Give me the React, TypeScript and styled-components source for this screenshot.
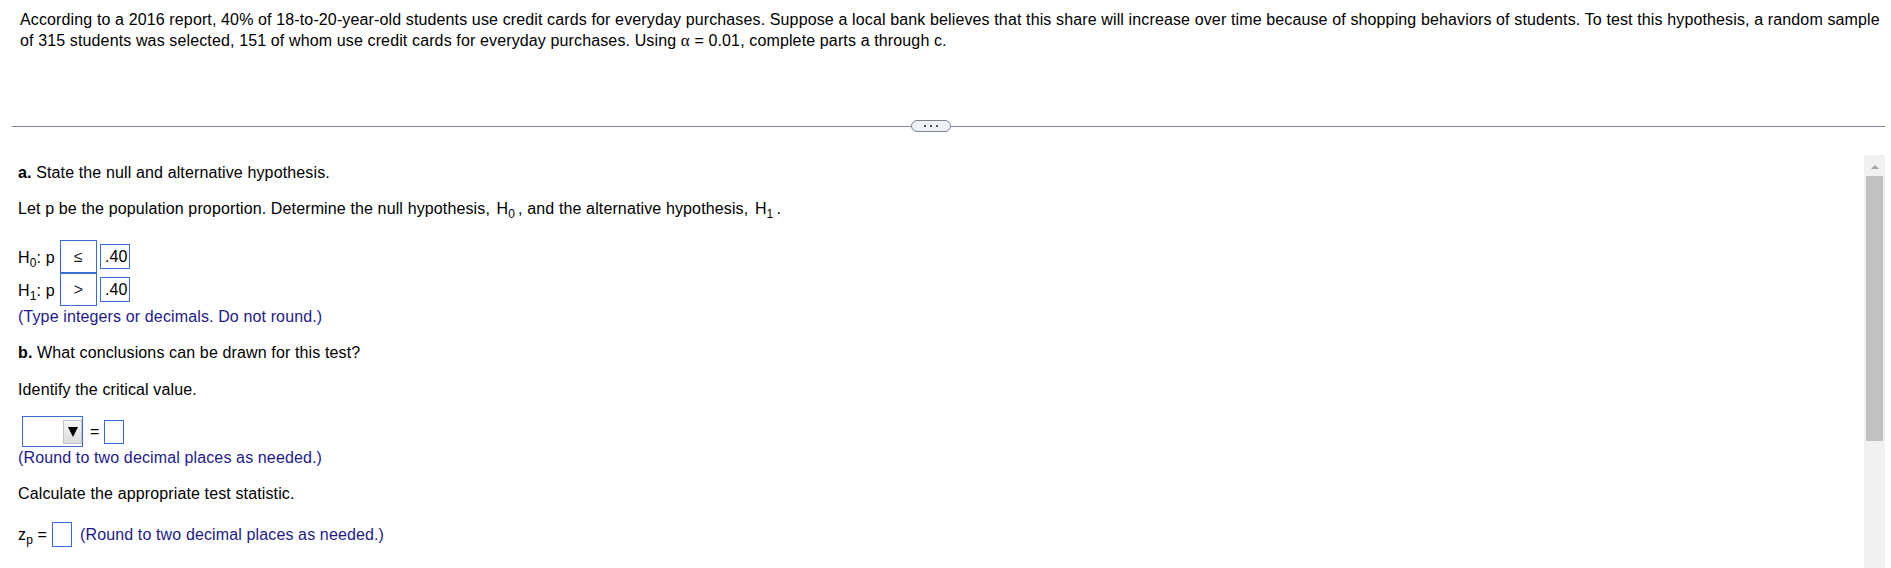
import React from 'react';
import styled, { createGlobalStyle } from 'styled-components';

const GlobalStyle = createGlobalStyle`
  html, body { margin: 0; padding: 0; background: #fff; }
  body {
    font-family: "Liberation Sans", Arial, sans-serif;
    font-size: 16px;
    letter-spacing: 0.13px;
    color: #000;
  }
`;

const BLUE = '#3b6ccf';
const NOTE = '#1e1a86';

const Page = styled.div`
  width: 1891px;
  height: 568px;
  overflow: hidden;
  box-sizing: border-box;
  padding-right: 6px;
  display: flex;
  flex-direction: column;
`;

const Stem = styled.p`
  margin: 0;
  padding: 9px 0 0 20px;
  line-height: 21px;
`;

const Alpha = styled.span`
  font-family: "Liberation Serif", "Times New Roman", serif;
  font-size: 17px;
`;

const Divider = styled.div`
  display: flex;
  align-items: center;
  height: 12px;
  margin: 69px 0 0 12px;
`;

const Rule = styled.div<{ $w?: number }>`
  height: 1px;
  background: #7c8595;
  flex: ${(p) => (p.$w ? `0 0 ${p.$w}px` : '1 1 auto')};
`;

const MorePill = styled.div`
  width: 40px;
  height: 12px;
  box-sizing: border-box;
  border: 1px solid #7c8595;
  border-radius: 6px;
  background: #eef1f5;
  display: flex;
  align-items: center;
  justify-content: center;
  gap: 4px;
`;

const Dot = styled.span`
  width: 2px;
  height: 2px;
  background: #4a5160;
`;

const Panel = styled.div`
  display: flex;
  margin-top: 23px;
  flex: 1 1 auto;
  min-height: 0;
`;

const Content = styled.div`
  flex: 1 1 auto;
  padding: 9px 0 0 18px;
  line-height: 18px;
`;

const ScrollTrack = styled.div`
  width: 21px;
  background: #f1f1f1;
  display: flex;
  flex-direction: column;
  align-items: center;
  padding-top: 10px;
  box-sizing: border-box;
`;

const UpArrow = styled.div`
  width: 0;
  height: 0;
  border-left: 4.5px solid transparent;
  border-right: 4.5px solid transparent;
  border-bottom: 4px solid #a3a3a3;
`;

const Thumb = styled.div`
  width: 17px;
  height: 265px;
  margin-top: 7px;
  background: #c1c1c1;
`;

const Para = styled.p<{ $mt: number; $note?: boolean }>`
  margin: ${(p) => p.$mt}px 0 0;
  color: ${(p) => (p.$note ? NOTE : '#000')};
`;

const Sub = styled.sub`
  font-size: 12px;
  line-height: 0;
  vertical-align: -4px;
`;

const InlineMath = styled.span`
  padding: 0 3px 0 2px;
`;

const HypRow = styled.div<{ $mt: number }>`
  display: flex;
  align-items: center;
  height: 33px;
  margin-top: ${(p) => p.$mt}px;
`;

const HypLabel = styled.span`
  width: 42px;
  padding-top: 2px;
`;

const RelBox = styled.div`
  width: 37px;
  height: 33px;
  box-sizing: border-box;
  border: 1px solid ${BLUE};
  display: flex;
  align-items: center;
  justify-content: center;
  color: #222;
  font-size: 16px;
`;

const ValueBox = styled.div`
  width: 30px;
  height: 25px;
  margin-left: 3px;
  box-sizing: border-box;
  border: 1px solid ${BLUE};
  padding-left: 4px;
  display: flex;
  align-items: center;
`;

const AnswerRow = styled.div<{ $mt: number; $h: number }>`
  display: flex;
  align-items: center;
  height: ${(p) => p.$h}px;
  margin-top: ${(p) => p.$mt}px;
`;

const Dropdown = styled.div`
  width: 61px;
  height: 31px;
  margin-left: 4px;
  box-sizing: border-box;
  border: 1px solid ${BLUE};
  display: flex;
  align-items: center;
  justify-content: flex-end;
`;

const DropButton = styled.div`
  width: 19px;
  height: 24px;
  box-sizing: border-box;
  border: 1px solid #c4c4c4;
  background: linear-gradient(#f5f5f5, #dcdcdc);
  display: flex;
  align-items: center;
  justify-content: center;
`;

const DownTriangle = styled.span`
  width: 0;
  height: 0;
  border-left: 5px solid transparent;
  border-right: 5px solid transparent;
  border-top: 10px solid #000;
`;

const Equals = styled.span<{ $ml: number }>`
  margin-left: ${(p) => p.$ml}px;
`;

const InputBox = styled.div<{ $ml: number; $h: number }>`
  width: 20px;
  height: ${(p) => p.$h}px;
  margin-left: ${(p) => p.$ml}px;
  box-sizing: border-box;
  border: 1px solid ${BLUE};
`;

const Note = styled.span<{ $ml: number }>`
  margin-left: ${(p) => p.$ml}px;
  color: ${NOTE};
`;

export default function App() {
  return (
    <>
      <GlobalStyle />
      <Page>
        <Stem>
          According to a 2016 report, 40% of 18-to-20-year-old students use credit cards for everyday purchases. Suppose a
          local bank believes that this share will increase over time because of shopping behaviors of students. To test this
          hypothesis, a random sample of 315 students was selected, 151 of whom use credit cards for everyday purchases. Using{' '}
          <Alpha>α</Alpha>
          {' = 0.01, complete parts a through c.'}
        </Stem>

        <Divider>
          <Rule $w={899} />
          <MorePill>
            <Dot />
            <Dot />
            <Dot />
          </MorePill>
          <Rule />
        </Divider>

        <Panel>
          <Content>
            <Para $mt={0}>
              <b>a.</b> State the null and alternative hypothesis.
            </Para>
            <Para $mt={18}>
              {'Let p be the population proportion. Determine the null hypothesis, '}
              <InlineMath>
                H<Sub>0</Sub>
              </InlineMath>
              {', and the alternative hypothesis, '}
              <InlineMath>
                H<Sub>1</Sub>
              </InlineMath>
              .
            </Para>

            <HypRow $mt={22}>
              <HypLabel>
                H<Sub>0</Sub>: p
              </HypLabel>
              <RelBox>≤</RelBox>
              <ValueBox>.40</ValueBox>
            </HypRow>
            <HypRow $mt={0}>
              <HypLabel>
                H<Sub>1</Sub>: p
              </HypLabel>
              <RelBox>&gt;</RelBox>
              <ValueBox>.40</ValueBox>
            </HypRow>
            <Para $mt={2} $note>
              (Type integers or decimals. Do not round.)
            </Para>

            <Para $mt={18}>
              <b>b.</b> What conclusions can be drawn for this test?
            </Para>
            <Para $mt={19}>Identify the critical value.</Para>

            <AnswerRow $mt={17} $h={31}>
              <Dropdown>
                <DropButton>
                  <DownTriangle />
                </DropButton>
              </Dropdown>
              <Equals $ml={7}>=</Equals>
              <InputBox $ml={5} $h={24} />
            </AnswerRow>
            <Para $mt={2} $note>
              (Round to two decimal places as needed.)
            </Para>

            <Para $mt={18}>Calculate the appropriate test statistic.</Para>

            <AnswerRow $mt={19} $h={25}>
              <span>
                z<Sub>p</Sub> =
              </span>
              <InputBox $ml={5} $h={25} />
              <Note $ml={8}>(Round to two decimal places as needed.)</Note>
            </AnswerRow>
          </Content>
          <ScrollTrack>
            <UpArrow />
            <Thumb />
          </ScrollTrack>
        </Panel>
      </Page>
    </>
  );
}
